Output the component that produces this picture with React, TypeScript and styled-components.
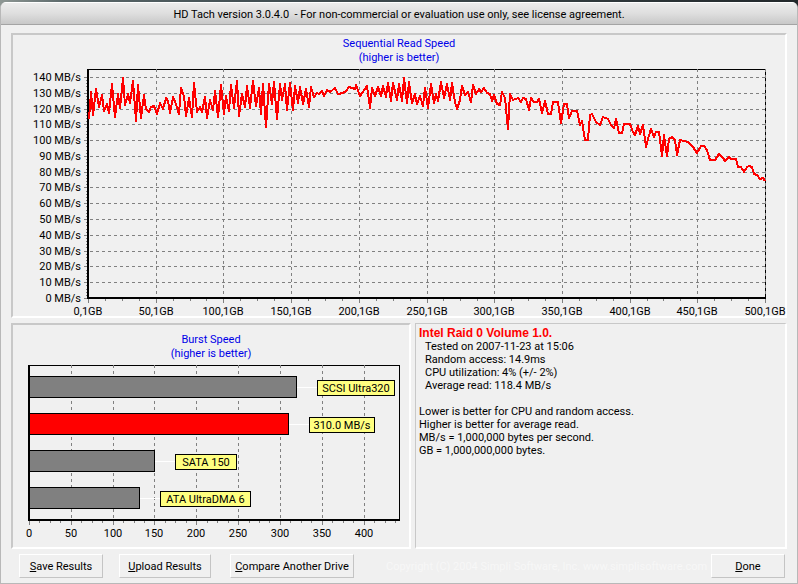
import React from "react";
import styled, { createGlobalStyle } from "styled-components";

const GlobalStyle = createGlobalStyle`
  * { box-sizing: border-box; }
  body { margin: 0; background: #f0f0f0; }
  body, button { font-family: Roboto, "Liberation Sans", Arial, sans-serif; font-size: 11px; color: #000; }
`;

const Desktop = styled.div`
  padding-top: 2px;
  background: linear-gradient(90deg, #8e9794 0, #5c696b 8%, #435054 30%, #374245 60%, #22282b 100%);
`;

const Window = styled.main`
  display: flex;
  flex-direction: column;
  min-height: calc(100vh - 2px);
  background: #f0f0f0;
  border: 1px solid #b8b8b8;
  border-top: 0;
  border-radius: 6px 6px 0 0;
  overflow: hidden;
`;

const TitleBar = styled.header`
  height: 23px;
  border-top: 1px solid #fff;
  border-bottom: 1px solid #a4a4a4;
  background: linear-gradient(#ececec, #dedede 50%, #c8c8c8);
`;

const Title = styled.h1`
  margin: 0;
  font-size: 11px;
  line-height: 23px;
  font-weight: 400;
  text-align: center;
  white-space: pre;
`;

const Content = styled.div`
  display: grid;
  grid-template-columns: 400fr 372fr;
  gap: 5px 4px;
  padding: 8px 10px 5px;
`;

const Panel = styled.section<{ $wide?: boolean }>`
  grid-column: ${(p) => (p.$wide ? "1 / -1" : "auto")};
  min-width: 0;
  border: 2px solid #c8c8c8;
  border-right-color: #fff;
  border-bottom-color: #fff;
`;

const InfoPanel = styled(Panel)`
  border-top-width: 1px;
  border-left-width: 1px;
  padding: 3px;
`;

const ChartTitle = styled.h2<{ $top: number }>`
  margin: 0;
  padding-top: ${(p) => p.$top}px;
  font-size: 11px;
  line-height: 14px;
  font-weight: 400;
  text-align: center;
  color: #0000e8;
`;

const Chart = styled.svg`
  display: block;
  width: 100%;
  height: auto;
  overflow: visible;
  font-family: Roboto, "Liberation Sans", Arial, sans-serif;
  font-size: 11px;
`;

const DriveName = styled.h2`
  margin: 0;
  font: 700 12px/13px "Liberation Sans", Arial, sans-serif;
  color: #f00;
`;

const InfoLine = styled.p<{ $indent?: boolean; $gap?: boolean }>`
  margin: ${(p) => (p.$gap ? 13 : 0)}px 0 0;
  padding-left: ${(p) => (p.$indent ? 6 : 0)}px;
  line-height: 13px;
`;

const Footer = styled.footer`
  display: flex;
  align-items: center;
  padding: 0 12px 4px 18px;
`;

const PushButton = styled.button<{ $width: number; $after?: number }>`
  width: ${(p) => p.$width}px;
  height: 24px;
  margin-right: ${(p) => p.$after ?? 0}px;
  padding: 0;
  background: #f0f0f0;
  border: 1px solid #c4c4c4;
  border-top-color: #fff;
  border-left-color: #fff;
  white-space: nowrap;

  u {
    text-decoration-thickness: 1px;
    text-underline-offset: 1px;
    text-decoration-skip-ink: none;
  }
`;

const Copyright = styled.small`
  flex: 1;
  font-size: 11px;
  color: #f7f7f7;
`;

const GRID = "#808080";

const READ_TRACE =
  "89,119 91,92 93,115 96,89 99,107 102,95 104,111 107,104 109,113 112,84 115,117 118,94 120,108 123,78 125,105 128,94 130,103 133,81 136,121 138,85 141,118 144,95 146,109 149,112 151,107 154,106 157,114 160,103 163,109 166,98 168,101 170,113 173,97 176,104 179,114 181,88 184,96 186,116 189,98 192,117 194,83 197,112 200,107 202,112 205,97 207,118 210,100 213,110 215,91 218,117 221,85 224,114 226,96 229,111 231,85 234,108 237,81 239,116 242,94 245,107 247,86 250,108 253,81 256,106 " +
  "259,88 261,114 263,84 266,127 269,84 272,104 274,82 277,119 280,84 282,100 285,84 287,110 290,83 293,110 295,86 298,103 300,87 303,104 306,89 309,107 311,87 314,97 317,93 319,94 322,91 324,96 327,90 330,92 335,88 338,94 343,93 346,91 349,87 355,89 356,85 360,96 362,93 367,86 370,108 372,88 375,96 378,87 381,96 383,86 386,97 388,83 391,101 393,83 397,100 399,84 402,101 404,78 407,103 409,82 412,103 415,94 417,104 420,96 423,106 425,88 428,108 " +
  "431,84 434,103 436,94 438,101 441,82 444,98 447,84 450,100 452,83 455,102 457,109 460,100 462,86 465,95 468,92 471,102 473,85 476,94 479,89 481,92 484,88 487,93 490,94 492,101 494,95 497,104 500,105 502,92 505,98 508,129 510,94 513,100 518,98 521,102 523,98 526,99 529,110 531,98 534,102 537,102 539,99 542,113 545,101 548,114 551,114 553,102 558,102 561,123 564,104 567,104 569,118 572,111 577,111 580,125 582,121 585,140 588,140 590,115 " +
  "592,114 596,122 600,125 603,117 608,119 611,125 614,128 616,119 619,133 622,133 624,124 630,124 633,132 635,135 638,126 640,134 643,125 646,147 648,139 651,129 654,137 656,132 659,132 662,156 664,135 667,156 669,139 672,137 675,140 677,155 680,140 688,142 691,145 693,147 697,153 701,146 704,146 707,150 710,160 715,160 719,154 723,158 725,161 729,157 731,159 736,159 738,167 741,167 744,172 747,167 749,166 752,167 754,174 757,175 760,179 763,178 765,181";

const range = (n: number) => Array.from({ length: n }, (_, i) => i);
const speedY = (mb: number) => Math.round(298 - mb * 1.579);
const positionX = (gb: number) => Math.round(88 + gb * 1.354);

function ReadSpeedChart() {
  return (
    <Chart viewBox="13 65 772 251" role="img" aria-label="Sequential read speed by position">
      <g shapeRendering="crispEdges" stroke={GRID} fill="none">
        {range(15).map((i) => {
          const y = speedY(i * 10) + 0.5;
          return (
            <g key={i}>
              <path d={`M84 ${y}H88`} />
              {i > 0 && <path d={`M90 ${y}H765`} strokeDasharray="3 3" />}
            </g>
          );
        })}
        <path d="M88.5 69.5H765" stroke="#000" />
        <path d="M765.5 69V298" stroke="#000" />
        {range(11).map((i) => {
          const x = positionX(i * 50) + 0.5;
          return (
            <g key={i}>
              <path d={`M${x} 299V303`} />
              {i > 0 && <path d={`M${x} 69V298`} strokeDasharray="3 3" />}
            </g>
          );
        })}
        {range(40).map((i) => (
          <path key={i} d={`M${positionX(i * 12.5) + 0.5} 299V301`} />
        ))}
        {range(70).map((i) => (
          <path key={i} d={`M86 ${speedY(i * 2) + 0.5}H88`} />
        ))}
        <path d="M88 69V298H766" stroke="#000" strokeWidth="2" />
      </g>
      <polyline points={READ_TRACE} fill="none" stroke="#f00" strokeWidth="2" strokeLinejoin="round" shapeRendering="crispEdges" />
      {range(15).map((i) => (
        <text key={i} x="81" y={speedY(i * 10) + 4} textAnchor="end">{i * 10} MB/s</text>
      ))}
      {range(11).map((i) => (
        <text key={i} x={positionX(i * 50)} y="315" textAnchor="middle">{i * 50},1GB</text>
      ))}
    </Chart>
  );
}

const BURSTS = [
  { label: "SCSI Ultra320", end: 296, tag: 317, width: 78, color: "#808080" },
  { label: "310.0 MB/s", end: 288, tag: 309, width: 66, color: "#f00" },
  { label: "SATA 150", end: 154, tag: 175, width: 62, color: "#808080" },
  { label: "ATA UltraDMA 6", end: 139, tag: 160, width: 91, color: "#808080" },
];

function BurstSpeedChart() {
  const burstX = (mb: number) => Math.round(29 + mb * 0.8365);
  return (
    <Chart viewBox="13 361 396 186" role="img" aria-label="Burst speed compared">
      <g shapeRendering="crispEdges" stroke={GRID} fill="none">
        <path d="M29 365.5H399.5V520" stroke="#000" />
        {range(36).map((i) => (
          <path key={i} d={`M${burstX(i * 12.5) + 0.5} 521V${i % 4 ? 523 : 525}`} />
        ))}
        {range(8).map((i) => (
          <path key={i} d={`M${burstX((i + 1) * 50) + 0.5} 365V519`} strokeDasharray="3 3" />
        ))}
        {BURSTS.map((b, i) => {
          const y = 376 + i * 37;
          return (
            <g key={b.label}>
              <rect x="29.5" y={y + 0.5} width={b.end - 29} height="21" fill={b.color} stroke="#000" />
              <path d={`M${b.end + 1} ${y + 11.5}H${b.tag}`} stroke="#fff" />
              <rect x={b.tag + 0.5} y={y + 4.5} width={b.width - 1} height="15" fill="#ffff80" stroke="#000" />
            </g>
          );
        })}
        <path d="M29 365V520H400" stroke="#000" strokeWidth="2" />
      </g>
      {BURSTS.map((b, i) => (
        <text key={b.label} x={b.tag + b.width / 2} y={392 + i * 37} textAnchor="middle">{b.label}</text>
      ))}
      {range(9).map((i) => (
        <text key={i} x={burstX(i * 50)} y="537" textAnchor="middle">{i * 50}</text>
      ))}
    </Chart>
  );
}

export default function App() {
  return (
    <Desktop>
      <GlobalStyle />
      <Window>
        <TitleBar>
          <Title>{"HD Tach version 3.0.4.0  - For non-commercial or evaluation use only, see license agreement."}</Title>
        </TitleBar>
        <Content>
          <Panel $wide>
            <ChartTitle $top={2}>Sequential Read Speed<br />(higher is better)</ChartTitle>
            <ReadSpeedChart />
          </Panel>
          <Panel>
            <ChartTitle $top={8}>Burst Speed<br />(higher is better)</ChartTitle>
            <BurstSpeedChart />
          </Panel>
          <InfoPanel>
            <DriveName>Intel Raid 0 Volume 1.0.</DriveName>
            <InfoLine $indent>Tested on 2007-11-23 at 15:06</InfoLine>
            <InfoLine $indent>Random access: 14.9ms</InfoLine>
            <InfoLine $indent>CPU utilization: 4% (+/- 2%)</InfoLine>
            <InfoLine $indent>Average read: 118.4 MB/s</InfoLine>
            <InfoLine $gap>Lower is better for CPU and random access.</InfoLine>
            <InfoLine>Higher is better for average read.</InfoLine>
            <InfoLine>MB/s = 1,000,000 bytes per second.</InfoLine>
            <InfoLine>GB = 1,000,000,000 bytes.</InfoLine>
          </InfoPanel>
        </Content>
        <Footer>
          <PushButton $width={84} $after={16}><u>S</u>ave Results</PushButton>
          <PushButton $width={92} $after={19}><u>U</u>pload Results</PushButton>
          <PushButton $width={124} $after={32}><u>C</u>ompare Another Drive</PushButton>
          <Copyright>Copyright (C) 2004 Simpli Software, Inc. www.simplisoftware.com</Copyright>
          <PushButton $width={74}><u>D</u>one</PushButton>
        </Footer>
      </Window>
    </Desktop>
  );
}
